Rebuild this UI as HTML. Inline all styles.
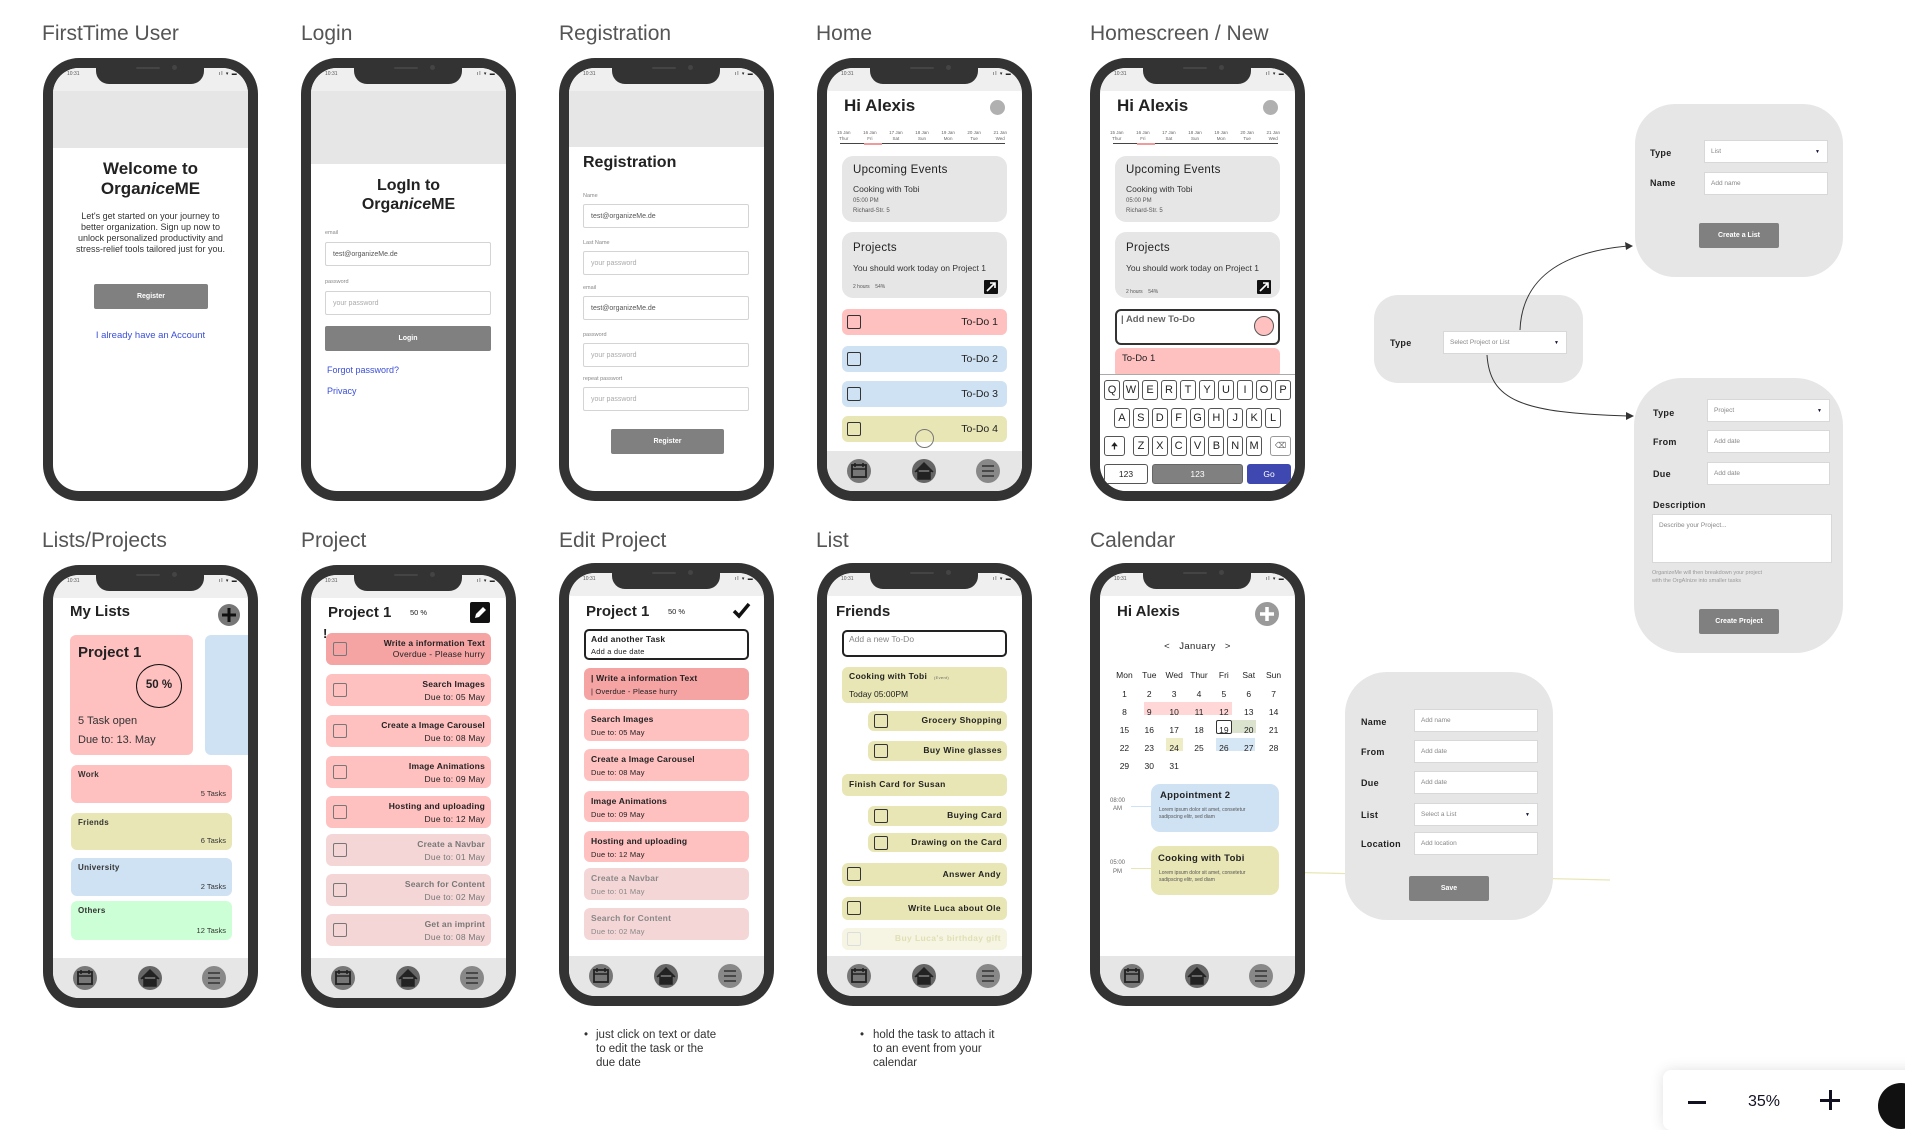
<!DOCTYPE html>
<html><head><meta charset="utf-8"><style>
*{box-sizing:border-box;margin:0;padding:0}
body{width:1905px;height:1105px;background:#fff;position:relative;overflow:hidden;font-family:"Liberation Sans",Arial,sans-serif;color:#222}
.a{position:absolute;white-space:nowrap}
.ttl{position:absolute;font-size:21px;color:#555;line-height:24px}
.ph{position:absolute;width:215px;height:443px;background:#333;border-radius:36px}
.sc{position:absolute;left:10px;top:10px;width:195px;height:423px;background:#fff;border-radius:26px;overflow:hidden}
.c{position:absolute;left:-10px;top:-10px;width:215px;height:443px}
.stb{position:absolute;left:10px;top:10px;width:195px;height:23px;background:#efefef}
.notch{position:absolute;left:53px;top:0;width:108px;height:26px;background:#333;border-radius:0 0 13px 13px}
.notch:before{content:"";position:absolute;left:40px;top:9px;width:24px;height:2px;background:#444;border-radius:1px}
.notch:after{content:"";position:absolute;left:76px;top:7px;width:5px;height:5px;background:#444;border-radius:50%}
.tm{position:absolute;left:24px;top:13px;font-size:5px;color:#555}
.sig{position:absolute;left:176px;top:13px;font-size:5px;color:#222;letter-spacing:1px}
.nv{position:absolute;left:10px;top:393px}
.hdr{position:absolute;left:10px;top:10px;width:195px;background:#e6e6e6}
.inp{position:absolute;left:24px;width:166px;height:24px;border:1px solid #d4d4d4;border-radius:2px;background:#fff;font-size:7px;color:#aaa;padding:8px 0 0 7px}
.lbl{position:absolute;left:24px;font-size:5.5px;color:#888}
.btn{position:absolute;background:#808080;color:#fff;font-size:7px;font-weight:bold;text-align:center;border-radius:2px}
.bg{position:absolute;left:25px;width:165px;background:#e6e6e6;border-radius:11px}
.row{position:absolute;left:25px;width:165px;border-radius:6px}
.cb{position:absolute;width:14px;height:14px;border:1.5px solid #333;border-radius:2px}
.pk{background:#ffc0c0}.bl{background:#cfe2f3}.yl{background:#e8e6b5}.dp{background:#f5a3a3}.lp{background:#f5d6d6}.gr{background:#ccffd5}
.kb{position:absolute;height:20px;border:1.2px solid #555;border-radius:3px;background:#fff;font-size:11px;text-align:center;line-height:18px;color:#222}
.pn{position:absolute;background:#e6e6e6}
.fl{position:absolute;font-size:9px;font-weight:bold;color:#222;letter-spacing:.3px}
.fi{position:absolute;background:#fff;border:1px solid #d8d8d8;font-size:6.5px;color:#888;padding:7px 0 0 6px;height:23px}
.dd:after{content:"▼";position:absolute;right:7px;top:8px;font-size:5px;color:#113}
.note{position:absolute;font-size:11.5px;color:#333;line-height:14px}
.cal span{display:inline-block;width:24.86px;text-align:center}
</style></head><body>

<!-- Titles -->
<div class="ttl" style="left:42px;top:22px">FirstTime User</div>
<div class="ttl" style="left:301px;top:22px">Login</div>
<div class="ttl" style="left:559px;top:22px">Registration</div>
<div class="ttl" style="left:816px;top:22px">Home</div>
<div class="ttl" style="left:1090px;top:22px">Homescreen / New</div>
<div class="ttl" style="left:42px;top:529px">Lists/Projects</div>
<div class="ttl" style="left:301px;top:529px">Project</div>
<div class="ttl" style="left:559px;top:529px">Edit Project</div>
<div class="ttl" style="left:816px;top:529px">List</div>
<div class="ttl" style="left:1090px;top:529px">Calendar</div>

<!-- FirstTime -->
<div class="ph" style="left:43px;top:58px"><div class="sc"><div class="c">
<div class="hdr" style="height:80px"></div><div class="stb"></div>
<div class="a" style="left:0;width:215px;text-align:center;top:101px;font-size:17px;font-weight:bold;line-height:20px">Welcome to<br>Orga<i>nice</i>ME</div>
<div class="a" style="left:30px;width:155px;text-align:center;top:153px;font-size:9px;line-height:11px;white-space:normal;color:#333">Let's get started on your journey to better organization. Sign up now to unlock personalized productivity and stress-relief tools tailored just for you.</div>
<div class="btn" style="left:51px;top:226px;width:114px;height:25px;line-height:25px">Register</div>
<div class="a" style="left:0;width:215px;text-align:center;top:272px;font-size:9.5px;color:#3b4fd8">I already have an Account</div>
</div></div><div class="notch"></div><div class="tm">10:31</div><div class="sig">ıl ▾ ▬</div></div>

<!-- Login -->
<div class="ph" style="left:301px;top:58px"><div class="sc"><div class="c">
<div class="hdr" style="height:96px"></div><div class="stb"></div>
<div class="a" style="left:0;width:215px;text-align:center;top:118px;font-size:16px;font-weight:bold;line-height:19px">LogIn to<br>Orga<i>nice</i>ME</div>
<div class="lbl" style="top:172px">email</div>
<div class="inp" style="top:184px;color:#555">test@organizeMe.de</div>
<div class="lbl" style="top:221px">password</div>
<div class="inp" style="top:233px">your password</div>
<div class="btn" style="left:24px;top:268px;width:166px;height:25px;line-height:25px">Login</div>
<div class="a" style="left:26px;top:307px;font-size:9px;color:#3b4fd8">Forgot password?</div>
<div class="a" style="left:26px;top:328px;font-size:9px;color:#3b4fd8">Privacy</div>
</div></div><div class="notch"></div><div class="tm">10:31</div><div class="sig">ıl ▾ ▬</div></div>

<!-- Registration -->
<div class="ph" style="left:559px;top:58px"><div class="sc"><div class="c">
<div class="hdr" style="height:79px"></div><div class="stb"></div>
<div class="a" style="left:24px;top:96px;font-size:16px;font-weight:bold">Registration</div>
<div class="lbl" style="top:135px">Name</div><div class="inp" style="top:146px;color:#555">test@organizeMe.de</div>
<div class="lbl" style="top:182px">Last Name</div><div class="inp" style="top:193px">your password</div>
<div class="lbl" style="top:227px">email</div><div class="inp" style="top:238px;color:#555">test@organizeMe.de</div>
<div class="lbl" style="top:274px">password</div><div class="inp" style="top:285px">your password</div>
<div class="lbl" style="top:318px">repeat passwort</div><div class="inp" style="top:329px">your password</div>
<div class="btn" style="left:52px;top:371px;width:113px;height:25px;line-height:25px">Register</div>
</div></div><div class="notch"></div><div class="tm">10:31</div><div class="sig">ıl ▾ ▬</div></div>

<!-- Home -->
<div class="ph" style="left:817px;top:58px"><div class="sc"><div class="c">
<div class="stb"></div>
<div class="a" style="left:27px;top:38px;font-size:17px;font-weight:bold">Hi Alexis</div>
<div class="a" style="left:173px;top:42px;width:15px;height:15px;border-radius:50%;background:#b0b0b0"></div>
<div class="a" style="left:20px;top:72px;width:170px;font-size:4.5px;color:#666;line-height:6px;display:flex;justify-content:space-between;text-align:center"><span>15 Jan<br>Thur</span><span>16 Jan<br>Fri</span><span>17 Jan<br>Sat</span><span>18 Jan<br>Sun</span><span>19 Jan<br>Mon</span><span>20 Jan<br>Tue</span><span>21 Jan<br>Wed</span></div>
<div class="a" style="left:23px;top:85px;width:165px;height:1px;background:#444"></div>
<div class="a" style="left:47px;top:85px;width:18px;height:1.5px;background:#f19a9a"></div>
<div class="bg" style="top:98px;height:66px"></div>
<div class="a" style="left:36px;top:106px;font-size:11.5px;color:#222;letter-spacing:.3px">Upcoming Events</div>
<div class="a" style="left:36px;top:126px;font-size:8.5px;color:#333">Cooking with Tobi</div>
<div class="a" style="left:36px;top:140px;font-size:6px;color:#555">05:00 PM</div>
<div class="a" style="left:36px;top:150px;font-size:6px;color:#555">Richard-Str. 5</div>
<div class="bg" style="top:174px;height:66px"></div>
<div class="a" style="left:36px;top:184px;font-size:11.5px;letter-spacing:.3px">Projects</div>
<div class="a" style="left:36px;top:205px;font-size:8.5px;color:#333">You should work today on Project 1</div>
<div class="a" style="left:36px;top:226px;font-size:5px;color:#555">2 hours &nbsp;&nbsp; 54%</div>
<svg class="a" style="left:167px;top:222px" width="14" height="14"><rect width="14" height="14" rx="1" fill="#111"/><path d="M3 11 L11 3 M6 3 H11 V8" stroke="#fff" stroke-width="1.6" fill="none"/></svg>
<div class="row pk" style="top:251px;height:26px"><div class="cb" style="left:5px;top:6px"></div><div class="a" style="right:9px;top:7px;font-size:10.5px">To-Do 1</div></div>
<div class="row bl" style="top:288px;height:26px"><div class="cb" style="left:5px;top:6px"></div><div class="a" style="right:9px;top:7px;font-size:10.5px">To-Do 2</div></div>
<div class="row bl" style="top:323px;height:26px"><div class="cb" style="left:5px;top:6px"></div><div class="a" style="right:9px;top:7px;font-size:10.5px">To-Do 3</div></div>
<div class="row yl" style="top:358px;height:26px"><div class="cb" style="left:5px;top:6px"></div><div class="a" style="right:9px;top:7px;font-size:10.5px">To-Do 4</div></div>
<div class="a" style="left:98px;top:371px;width:19px;height:19px;border-radius:50%;border:1px solid #777"></div>
<div class="a" style="left:10px;top:393px;width:195px;height:40px;background:#e6e6e6"></div>
<svg class="nv" width="195" height="40"><circle cx="32" cy="20" r="12" fill="#777"/><rect x="25" y="14" width="14" height="12" fill="none" stroke="#222" stroke-width="1.8"/><path d="M25 18H39M28 12V16M36 12V16" stroke="#222" stroke-width="1.6"/><circle cx="97" cy="20" r="12" fill="#666"/><path d="M88 21 L97 12 L106 21 M91 19 V28 H103 V19" fill="#222" stroke="#222" stroke-width="1.5"/><circle cx="161" cy="20" r="12" fill="#888"/><path d="M155 15H167M155 20H167M155 25H167" stroke="#333" stroke-width="1.5"/></svg>
</div></div><div class="notch"></div><div class="tm">10:31</div><div class="sig">ıl ▾ ▬</div></div>

<!-- Homescreen / New -->
<div class="ph" style="left:1090px;top:58px"><div class="sc"><div class="c">
<div class="stb"></div>
<div class="a" style="left:27px;top:38px;font-size:17px;font-weight:bold">Hi Alexis</div>
<div class="a" style="left:173px;top:42px;width:15px;height:15px;border-radius:50%;background:#b0b0b0"></div>
<div class="a" style="left:20px;top:72px;width:170px;font-size:4.5px;color:#666;line-height:6px;display:flex;justify-content:space-between;text-align:center"><span>15 Jan<br>Thur</span><span>16 Jan<br>Fri</span><span>17 Jan<br>Sat</span><span>18 Jan<br>Sun</span><span>19 Jan<br>Mon</span><span>20 Jan<br>Tue</span><span>21 Jan<br>Wed</span></div>
<div class="a" style="left:23px;top:85px;width:165px;height:1px;background:#444"></div>
<div class="a" style="left:47px;top:85px;width:18px;height:1.5px;background:#f19a9a"></div>
<div class="bg" style="top:98px;height:66px"></div>
<div class="a" style="left:36px;top:106px;font-size:11.5px;letter-spacing:.3px">Upcoming Events</div>
<div class="a" style="left:36px;top:126px;font-size:8.5px;color:#333">Cooking with Tobi</div>
<div class="a" style="left:36px;top:140px;font-size:6px;color:#555">05:00 PM</div>
<div class="a" style="left:36px;top:150px;font-size:6px;color:#555">Richard-Str. 5</div>
<div class="bg" style="top:174px;height:66px"></div>
<div class="a" style="left:36px;top:184px;font-size:11.5px;letter-spacing:.3px">Projects</div>
<div class="a" style="left:36px;top:205px;font-size:8.5px;color:#333">You should work today on Project 1</div>
<div class="a" style="left:36px;top:231px;font-size:5px;color:#555">2 hours &nbsp;&nbsp; 54%</div>
<svg class="a" style="left:167px;top:222px" width="14" height="14"><rect width="14" height="14" rx="1" fill="#111"/><path d="M3 11 L11 3 M6 3 H11 V8" stroke="#fff" stroke-width="1.6" fill="none"/></svg>
<div class="row pk" style="top:290px;height:30px"><div class="a" style="left:7px;top:5px;font-size:9.5px">To-Do 1</div></div>
<div class="a" style="left:25px;top:251px;width:165px;height:36px;border:2px solid #333;border-radius:6px;background:#fff"></div>
<div class="a" style="left:31px;top:256px;font-size:9.5px;color:#666;font-weight:bold">| Add new To-Do</div>
<div class="a" style="left:164px;top:258px;width:20px;height:20px;border-radius:50%;background:#ffc0c0;border:1px solid #555"></div>
<div class="a" style="left:10px;top:316px;width:195px;height:117px;background:#fff;border-top:1px solid #aaa"></div>
<div class="a" style="left:14px;top:322px;width:187px;display:flex;gap:3px">
<div class="kb" style="position:relative;flex:1">Q</div><div class="kb" style="position:relative;flex:1">W</div><div class="kb" style="position:relative;flex:1">E</div><div class="kb" style="position:relative;flex:1">R</div><div class="kb" style="position:relative;flex:1">T</div><div class="kb" style="position:relative;flex:1">Y</div><div class="kb" style="position:relative;flex:1">U</div><div class="kb" style="position:relative;flex:1">I</div><div class="kb" style="position:relative;flex:1">O</div><div class="kb" style="position:relative;flex:1">P</div></div>
<div class="a" style="left:24px;top:350px;width:167px;display:flex;gap:3px">
<div class="kb" style="position:relative;flex:1">A</div><div class="kb" style="position:relative;flex:1">S</div><div class="kb" style="position:relative;flex:1">D</div><div class="kb" style="position:relative;flex:1">F</div><div class="kb" style="position:relative;flex:1">G</div><div class="kb" style="position:relative;flex:1">H</div><div class="kb" style="position:relative;flex:1">J</div><div class="kb" style="position:relative;flex:1">K</div><div class="kb" style="position:relative;flex:1">L</div></div>
<div class="kb" style="left:14px;top:378px;width:21px;font-size:9px">🠉</div>
<div class="a" style="left:43px;top:378px;width:129px;display:flex;gap:3px">
<div class="kb" style="position:relative;flex:1">Z</div><div class="kb" style="position:relative;flex:1">X</div><div class="kb" style="position:relative;flex:1">C</div><div class="kb" style="position:relative;flex:1">V</div><div class="kb" style="position:relative;flex:1">B</div><div class="kb" style="position:relative;flex:1">N</div><div class="kb" style="position:relative;flex:1">M</div></div>
<div class="kb" style="left:180px;top:378px;width:21px;font-size:8px;color:#666;border-color:#999">⌫</div>
<div class="kb" style="left:14px;top:406px;width:44px;font-size:8.5px">123</div>
<div class="kb" style="left:62px;top:406px;width:91px;font-size:8.5px;background:#808080;color:#fff;border-color:#666">123</div>
<div class="kb" style="left:157px;top:406px;width:44px;font-size:8.5px;background:#3f48b0;color:#fff;border-color:#3f48b0">Go</div>
</div></div><div class="notch"></div><div class="tm">10:31</div><div class="sig">ıl ▾ ▬</div></div>

<!-- Lists/Projects -->
<div class="ph" style="left:43px;top:565px"><div class="sc"><div class="c">
<div class="stb"></div>
<div class="a" style="left:27px;top:38px;font-size:15px;font-weight:bold">My Lists</div>
<svg class="a" style="left:174px;top:38px" width="24" height="24"><circle cx="12" cy="12" r="11" fill="#777"/><path d="M12 5V19M5 12H19" stroke="#111" stroke-width="3"/></svg>
<div class="a pk" style="left:27px;top:70px;width:123px;height:120px;border-radius:6px"></div>
<div class="a" style="left:35px;top:79px;font-size:15px;font-weight:bold">Project 1</div>
<div class="a" style="left:93px;top:99px;width:46px;height:44px;border:1.5px solid #111;border-radius:50%;font-size:11.5px;font-weight:bold;text-align:center;line-height:41px">50 %</div>
<div class="a" style="left:35px;top:150px;font-size:11px;color:#333">5 Task open</div>
<div class="a" style="left:35px;top:169px;font-size:11px;color:#333">Due to: 13. May</div>
<div class="a bl" style="left:162px;top:70px;width:50px;height:120px;border-radius:6px"></div>
<div class="row pk" style="left:28px;width:161px;top:200px;height:38px"><div class="a" style="left:7px;top:5px;font-size:8px;font-weight:bold;letter-spacing:.3px;color:#333">Work</div><div class="a" style="right:6px;top:24px;font-size:7.5px;color:#333">5 Tasks</div></div>
<div class="row yl" style="left:28px;width:161px;top:248px;height:37px"><div class="a" style="left:7px;top:5px;font-size:8px;font-weight:bold;letter-spacing:.3px;color:#333">Friends</div><div class="a" style="right:6px;top:23px;font-size:7.5px;color:#333">6 Tasks</div></div>
<div class="row bl" style="left:28px;width:161px;top:293px;height:38px"><div class="a" style="left:7px;top:5px;font-size:8px;font-weight:bold;letter-spacing:.3px;color:#333">University</div><div class="a" style="right:6px;top:24px;font-size:7.5px;color:#333">2 Tasks</div></div>
<div class="row gr" style="left:28px;width:161px;top:336px;height:39px"><div class="a" style="left:7px;top:5px;font-size:8px;font-weight:bold;letter-spacing:.3px;color:#333">Others</div><div class="a" style="right:6px;top:25px;font-size:7.5px;color:#333">12 Tasks</div></div>
<div class="a" style="left:10px;top:393px;width:195px;height:40px;background:#e6e6e6"></div>
<svg class="nv" width="195" height="40"><circle cx="32" cy="20" r="12" fill="#777"/><rect x="25" y="14" width="14" height="12" fill="none" stroke="#222" stroke-width="1.8"/><path d="M25 18H39M28 12V16M36 12V16" stroke="#222" stroke-width="1.6"/><circle cx="97" cy="20" r="12" fill="#666"/><path d="M88 21 L97 12 L106 21 M91 19 V28 H103 V19" fill="#222" stroke="#222" stroke-width="1.5"/><circle cx="161" cy="20" r="12" fill="#888"/><path d="M155 15H167M155 20H167M155 25H167" stroke="#333" stroke-width="1.5"/></svg>
</div></div><div class="notch"></div><div class="tm">10:31</div><div class="sig">ıl ▾ ▬</div></div>

<!-- Project -->
<div class="ph" style="left:301px;top:565px"><div class="sc"><div class="c">
<div class="stb"></div>
<div class="a" style="left:27px;top:39px;font-size:15px;font-weight:bold">Project 1</div>
<div class="a" style="left:109px;top:43px;font-size:7.5px">50 %</div>
<svg class="a" style="left:169px;top:37px" width="20" height="21"><rect width="20" height="21" rx="2" fill="#111"/><path d="M5 16 L6 12 L13 5 L16 8 L9 15 Z" fill="#fff"/></svg>
<div class="row dp" style="top:68px;height:32px"><div class="cb" style="left:7px;top:9px;border-color:#777"></div><div class="a" style="right:6px;top:5px;text-align:right;font-size:8.5px;line-height:11px;color:#222;letter-spacing:.2px"><b style="font-weight:600">Write a information Text</b><br>Overdue - Please hurry</div></div>
<div class="a" style="left:22px;top:62px;font-size:13px;font-weight:bold;line-height:13px">!</div>
<div class="row pk" style="top:109px;height:32px"><div class="cb" style="left:7px;top:9px;border-color:#777"></div><div class="a" style="right:6px;top:4px;text-align:right;font-size:8.5px;line-height:13px;color:#222;letter-spacing:.2px"><b style="font-weight:600">Search Images</b><br>Due to: 05 May</div></div>
<div class="row pk" style="top:150px;height:32px"><div class="cb" style="left:7px;top:9px;border-color:#777"></div><div class="a" style="right:6px;top:4px;text-align:right;font-size:8.5px;line-height:13px;color:#222;letter-spacing:.2px"><b style="font-weight:600">Create a Image Carousel</b><br>Due to: 08 May</div></div>
<div class="row pk" style="top:191px;height:32px"><div class="cb" style="left:7px;top:9px;border-color:#777"></div><div class="a" style="right:6px;top:4px;text-align:right;font-size:8.5px;line-height:13px;color:#222;letter-spacing:.2px"><b style="font-weight:600">Image Animations</b><br>Due to: 09 May</div></div>
<div class="row pk" style="top:231px;height:32px"><div class="cb" style="left:7px;top:9px;border-color:#777"></div><div class="a" style="right:6px;top:4px;text-align:right;font-size:8.5px;line-height:13px;color:#222;letter-spacing:.2px"><b style="font-weight:600">Hosting and uploading</b><br>Due to: 12 May</div></div>
<div class="row lp" style="top:269px;height:32px"><div class="cb" style="left:7px;top:9px;border-color:#777"></div><div class="a" style="right:6px;top:4px;text-align:right;font-size:8.5px;line-height:13px;color:#777;letter-spacing:.2px"><b style="font-weight:600">Create a Navbar</b><br>Due to: 01 May</div></div>
<div class="row lp" style="top:309px;height:32px"><div class="cb" style="left:7px;top:9px;border-color:#777"></div><div class="a" style="right:6px;top:4px;text-align:right;font-size:8.5px;line-height:13px;color:#777;letter-spacing:.2px"><b style="font-weight:600">Search for Content</b><br>Due to: 02 May</div></div>
<div class="row lp" style="top:349px;height:32px"><div class="cb" style="left:7px;top:9px;border-color:#777"></div><div class="a" style="right:6px;top:4px;text-align:right;font-size:8.5px;line-height:13px;color:#777;letter-spacing:.2px"><b style="font-weight:600">Get an imprint</b><br>Due to: 08 May</div></div>
<div class="a" style="left:10px;top:393px;width:195px;height:40px;background:#e6e6e6"></div>
<svg class="nv" width="195" height="40"><circle cx="32" cy="20" r="12" fill="#777"/><rect x="25" y="14" width="14" height="12" fill="none" stroke="#222" stroke-width="1.8"/><path d="M25 18H39M28 12V16M36 12V16" stroke="#222" stroke-width="1.6"/><circle cx="97" cy="20" r="12" fill="#666"/><path d="M88 21 L97 12 L106 21 M91 19 V28 H103 V19" fill="#222" stroke="#222" stroke-width="1.5"/><circle cx="161" cy="20" r="12" fill="#888"/><path d="M155 15H167M155 20H167M155 25H167" stroke="#333" stroke-width="1.5"/></svg>
</div></div><div class="notch"></div><div class="tm">10:31</div><div class="sig">ıl ▾ ▬</div></div>

<!-- Edit Project -->
<div class="ph" style="left:559px;top:563px"><div class="sc"><div class="c">
<div class="stb"></div>
<div class="a" style="left:27px;top:40px;font-size:15px;font-weight:bold">Project 1</div>
<div class="a" style="left:109px;top:44px;font-size:7.5px">50 %</div>
<svg class="a" style="left:173px;top:39px" width="19" height="17"><path d="M2 9 L7 14 L17 2" stroke="#111" stroke-width="3.5" fill="none"/></svg>
<div class="a" style="left:25px;top:66px;width:165px;height:31px;border:2px solid #222;border-radius:5px"></div>
<div class="a" style="left:32px;top:70px;font-size:8.5px;line-height:12px;letter-spacing:.2px"><b style="font-weight:600">Add another Task</b><br><span style="font-size:7.5px">Add a due date</span></div>
<div class="row dp" style="top:105px;height:32px"><div class="a" style="left:7px;top:4px;font-size:8.5px;line-height:13px;letter-spacing:.2px"><b style="font-weight:600">| Write a information Text</b><br><span style="font-size:7.5px">| Overdue - Please hurry</span></div></div>
<div class="row pk" style="top:146px;height:32px"><div class="a" style="left:7px;top:4px;font-size:8.5px;line-height:13px;letter-spacing:.2px"><b style="font-weight:600">Search Images</b><br><span style="font-size:7.5px">Due to: 05 May</span></div></div>
<div class="row pk" style="top:186px;height:32px"><div class="a" style="left:7px;top:4px;font-size:8.5px;line-height:13px;letter-spacing:.2px"><b style="font-weight:600">Create a Image Carousel</b><br><span style="font-size:7.5px">Due to: 08 May</span></div></div>
<div class="row pk" style="top:228px;height:31px"><div class="a" style="left:7px;top:4px;font-size:8.5px;line-height:13px;letter-spacing:.2px"><b style="font-weight:600">Image Animations</b><br><span style="font-size:7.5px">Due to: 09 May</span></div></div>
<div class="row pk" style="top:268px;height:31px"><div class="a" style="left:7px;top:4px;font-size:8.5px;line-height:13px;letter-spacing:.2px"><b style="font-weight:600">Hosting and uploading</b><br><span style="font-size:7.5px">Due to: 12 May</span></div></div>
<div class="row lp" style="top:305px;height:32px"><div class="a" style="left:7px;top:4px;font-size:8.5px;line-height:13px;letter-spacing:.2px;color:#888"><b style="font-weight:600">Create a Navbar</b><br><span style="font-size:7.5px">Due to: 01 May</span></div></div>
<div class="row lp" style="top:345px;height:32px"><div class="a" style="left:7px;top:4px;font-size:8.5px;line-height:13px;letter-spacing:.2px;color:#888"><b style="font-weight:600">Search for Content</b><br><span style="font-size:7.5px">Due to: 02 May</span></div></div>
<div class="a" style="left:10px;top:393px;width:195px;height:40px;background:#e6e6e6"></div>
<svg class="nv" width="195" height="40"><circle cx="32" cy="20" r="12" fill="#777"/><rect x="25" y="14" width="14" height="12" fill="none" stroke="#222" stroke-width="1.8"/><path d="M25 18H39M28 12V16M36 12V16" stroke="#222" stroke-width="1.6"/><circle cx="97" cy="20" r="12" fill="#666"/><path d="M88 21 L97 12 L106 21 M91 19 V28 H103 V19" fill="#222" stroke="#222" stroke-width="1.5"/><circle cx="161" cy="20" r="12" fill="#888"/><path d="M155 15H167M155 20H167M155 25H167" stroke="#333" stroke-width="1.5"/></svg>
</div></div><div class="notch"></div><div class="tm">10:31</div><div class="sig">ıl ▾ ▬</div></div>

<!-- List -->
<div class="ph" style="left:817px;top:563px"><div class="sc"><div class="c">
<div class="stb"></div>
<div class="a" style="left:19px;top:40px;font-size:15px;font-weight:bold">Friends</div>
<div class="a" style="left:25px;top:67px;width:165px;height:27px;border:2px solid #222;border-radius:5px"></div>
<div class="a" style="left:32px;top:71px;font-size:8.5px;color:#888">Add a new To-Do</div>
<div class="row yl" style="top:104px;height:36px"><div class="a" style="left:7px;top:4px;font-size:8.5px;font-weight:600;letter-spacing:.3px">Cooking with Tobi <span style="font-size:4px;font-weight:normal;color:#666">&nbsp;&nbsp;&nbsp;(Event)</span></div><div class="a" style="left:7px;top:22px;font-size:8.5px">Today 05:00PM</div></div>
<div class="row yl" style="left:51px;width:139px;top:148px;height:20px"><div class="cb" style="left:6px;top:3px"></div><div class="a" style="right:5px;top:4px;font-size:8.5px;font-weight:600;letter-spacing:.4px">Grocery Shopping</div></div>
<div class="row yl" style="left:51px;width:139px;top:178px;height:20px"><div class="cb" style="left:6px;top:3px"></div><div class="a" style="right:5px;top:4px;font-size:8.5px;font-weight:600;letter-spacing:.4px">Buy Wine glasses</div></div>
<div class="row yl" style="top:211px;height:22px"><div class="a" style="left:7px;top:5px;font-size:8.5px;font-weight:600;letter-spacing:.4px">Finish Card for Susan</div></div>
<div class="row yl" style="left:51px;width:139px;top:243px;height:20px"><div class="cb" style="left:6px;top:3px"></div><div class="a" style="right:5px;top:4px;font-size:8.5px;font-weight:600;letter-spacing:.4px">Buying Card</div></div>
<div class="row yl" style="left:51px;width:139px;top:270px;height:19px"><div class="cb" style="left:6px;top:3px"></div><div class="a" style="right:5px;top:4px;font-size:8.5px;font-weight:600;letter-spacing:.4px">Drawing on the Card</div></div>
<div class="row yl" style="top:300px;height:23px"><div class="cb" style="left:5px;top:4px"></div><div class="a" style="right:6px;top:6px;font-size:8.5px;font-weight:600;letter-spacing:.4px">Answer Andy</div></div>
<div class="row yl" style="top:334px;height:23px"><div class="cb" style="left:5px;top:4px"></div><div class="a" style="right:6px;top:6px;font-size:8.5px;font-weight:600;letter-spacing:.4px">Write Luca about Ole</div></div>
<div class="row" style="top:365px;height:22px;background:#f6f5e3"><div class="cb" style="left:5px;top:4px;border-color:#ddd"></div><div class="a" style="right:6px;top:5px;font-size:8.5px;font-weight:600;letter-spacing:.4px;color:#e0dfb3">Buy Luca's birthday gift</div></div>
<div class="a" style="left:10px;top:393px;width:195px;height:40px;background:#e6e6e6"></div>
<svg class="nv" width="195" height="40"><circle cx="32" cy="20" r="12" fill="#777"/><rect x="25" y="14" width="14" height="12" fill="none" stroke="#222" stroke-width="1.8"/><path d="M25 18H39M28 12V16M36 12V16" stroke="#222" stroke-width="1.6"/><circle cx="97" cy="20" r="12" fill="#666"/><path d="M88 21 L97 12 L106 21 M91 19 V28 H103 V19" fill="#222" stroke="#222" stroke-width="1.5"/><circle cx="161" cy="20" r="12" fill="#888"/><path d="M155 15H167M155 20H167M155 25H167" stroke="#333" stroke-width="1.5"/></svg>
</div></div><div class="notch"></div><div class="tm">10:31</div><div class="sig">ıl ▾ ▬</div></div>

<!-- yellow connector line -->
<svg class="a" style="left:1280px;top:860px" width="350" height="30"><path d="M0 12 L330 20" stroke="#e8e6b5" stroke-width="1.2"/></svg>

<!-- Calendar -->
<div class="ph" style="left:1090px;top:563px"><div class="sc"><div class="c">
<div class="stb"></div>
<div class="a" style="left:27px;top:40px;font-size:15px;font-weight:bold">Hi Alexis</div>
<svg class="a" style="left:165px;top:39px" width="24" height="24"><circle cx="12" cy="12" r="12" fill="#9a9a9a"/><path d="M12 5V19M5 12H19" stroke="#fff" stroke-width="3.5"/></svg>
<div class="a" style="left:0;width:215px;text-align:center;top:78px;font-size:9.5px;letter-spacing:.4px">&lt;&nbsp;&nbsp; January &nbsp;&nbsp;&gt;</div>
<div class="a" style="left:54px;top:139px;width:88px;height:13px;background:#ffd7d7"></div>
<div class="a" style="left:142px;top:157px;width:24px;height:13px;background:#dbe3cf"></div>
<div class="a" style="left:76px;top:175px;width:17px;height:13px;background:#eeecc4"></div>
<div class="a" style="left:126px;top:175px;width:39px;height:13px;background:#d5e6f5"></div>
<div class="a" style="left:126px;top:157px;width:16px;height:14px;border:1.5px solid #333;border-radius:2px"></div>
<div class="a cal" style="left:22px;top:103px;font-size:8.5px;line-height:18px;color:#222">
<div><span>Mon</span><span>Tue</span><span>Wed</span><span>Thur</span><span>Fri</span><span>Sat</span><span>Sun</span></div>
<div style="margin-top:1px"><span>1</span><span>2</span><span>3</span><span>4</span><span>5</span><span>6</span><span>7</span></div>
<div><span>8</span><span>9</span><span>10</span><span>11</span><span>12</span><span>13</span><span>14</span></div>
<div><span>15</span><span>16</span><span>17</span><span>18</span><span>19</span><span>20</span><span>21</span></div>
<div><span>22</span><span>23</span><span>24</span><span>25</span><span>26</span><span>27</span><span>28</span></div>
<div><span>29</span><span>30</span><span>31</span></div></div>
<div class="a" style="left:41px;top:243px;width:20px;height:1px;background:#cfe2f3"></div>
<div class="a" style="left:20px;top:234px;font-size:6px;color:#666;text-align:center;line-height:8px">08:00<br>AM</div>
<div class="a bl" style="left:61px;top:221px;width:128px;height:48px;border-radius:9px"></div>
<div class="a" style="left:70px;top:227px;font-size:9.5px;font-weight:600;letter-spacing:.3px">Appointment 2</div>
<div class="a" style="left:69px;top:244px;font-size:5px;color:#555;line-height:7px">Lorem ipsum dolor sit amet, consetetur<br>sadipscing elitr, sed diam</div>
<div class="a" style="left:41px;top:305px;width:20px;height:1px;background:#e8e6b5"></div>
<div class="a" style="left:20px;top:296px;font-size:6px;color:#666;text-align:center;line-height:9px">05:00<br>PM</div>
<div class="a yl" style="left:61px;top:283px;width:128px;height:49px;border-radius:9px"></div>
<div class="a" style="left:68px;top:290px;font-size:9.5px;font-weight:600;letter-spacing:.3px">Cooking with Tobi</div>
<div class="a" style="left:69px;top:307px;font-size:5px;color:#555;line-height:7px">Lorem ipsum dolor sit amet, consetetur<br>sadipscing elitr, sed diam</div>
<div class="a" style="left:10px;top:393px;width:195px;height:40px;background:#e6e6e6"></div>
<svg class="nv" width="195" height="40"><circle cx="32" cy="20" r="12" fill="#777"/><rect x="25" y="14" width="14" height="12" fill="none" stroke="#222" stroke-width="1.8"/><path d="M25 18H39M28 12V16M36 12V16" stroke="#222" stroke-width="1.6"/><circle cx="97" cy="20" r="12" fill="#666"/><path d="M88 21 L97 12 L106 21 M91 19 V28 H103 V19" fill="#222" stroke="#222" stroke-width="1.5"/><circle cx="161" cy="20" r="12" fill="#888"/><path d="M155 15H167M155 20H167M155 25H167" stroke="#333" stroke-width="1.5"/></svg>
</div></div><div class="notch"></div><div class="tm">10:31</div><div class="sig">ıl ▾ ▬</div></div>

<!-- Right side panels -->
<div class="pn" style="left:1374px;top:295px;width:209px;height:88px;border-radius:24px"></div>
<div class="fl" style="left:1390px;top:338px">Type</div>
<div class="fi dd" style="left:1443px;top:331px;width:124px">Select Project or List</div>

<div class="pn" style="left:1635px;top:104px;width:208px;height:173px;border-radius:40px"></div>
<div class="fl" style="left:1650px;top:148px">Type</div>
<div class="fi dd" style="left:1704px;top:140px;width:124px">List</div>
<div class="fl" style="left:1650px;top:178px">Name</div>
<div class="fi" style="left:1704px;top:172px;width:124px">Add name</div>
<div class="btn" style="left:1699px;top:223px;width:80px;height:25px;line-height:25px">Create a List</div>

<div class="pn" style="left:1634px;top:378px;width:209px;height:275px;border-radius:48px"></div>
<div class="fl" style="left:1653px;top:408px">Type</div>
<div class="fi dd" style="left:1707px;top:399px;width:123px">Project</div>
<div class="fl" style="left:1653px;top:437px">From</div>
<div class="fi" style="left:1707px;top:430px;width:123px">Add date</div>
<div class="fl" style="left:1653px;top:469px">Due</div>
<div class="fi" style="left:1707px;top:462px;width:123px">Add date</div>
<div class="fl" style="left:1653px;top:500px">Description</div>
<div class="fi" style="left:1652px;top:514px;width:180px;height:49px">Describe your Project...</div>
<div class="a" style="left:1652px;top:569px;font-size:5.5px;color:#999;line-height:8px">OrganizeMe will then breakdown your project<br>with the OrgAInize into smaller tasks</div>
<div class="btn" style="left:1699px;top:609px;width:80px;height:25px;line-height:25px">Create Project</div>

<div class="pn" style="left:1345px;top:672px;width:208px;height:248px;border-radius:42px"></div>
<div class="fl" style="left:1361px;top:717px">Name</div>
<div class="fi" style="left:1414px;top:709px;width:124px">Add name</div>
<div class="fl" style="left:1361px;top:747px">From</div>
<div class="fi" style="left:1414px;top:740px;width:124px">Add date</div>
<div class="fl" style="left:1361px;top:778px">Due</div>
<div class="fi" style="left:1414px;top:771px;width:124px">Add date</div>
<div class="fl" style="left:1361px;top:810px">List</div>
<div class="fi dd" style="left:1414px;top:803px;width:124px">Select a List</div>
<div class="fl" style="left:1361px;top:839px">Location</div>
<div class="fi" style="left:1414px;top:832px;width:124px">Add location</div>
<div class="btn" style="left:1409px;top:876px;width:80px;height:25px;line-height:25px">Save</div>

<!-- arrows -->
<svg class="a" style="left:0;top:0" width="1905" height="1105">
<path d="M1520 330 C1522 278 1562 252 1628 246" stroke="#333" stroke-width="1" fill="none"/>
<path d="M1633 246 L1625 242 L1626 250 Z" fill="#333"/>
<path d="M1487 355 C1490 400 1520 413 1628 416" stroke="#333" stroke-width="1" fill="none"/>
<path d="M1634 416 L1626 412 L1626 420 Z" fill="#333"/>
</svg>

<!-- notes -->
<div class="note" style="left:584px;top:1028px">•</div>
<div class="note" style="left:596px;top:1028px">just click on text or date<br>to edit the task or the<br>due date</div>
<div class="note" style="left:860px;top:1028px">•</div>
<div class="note" style="left:873px;top:1028px">hold the task to attach it<br>to an event from your<br>calendar</div>

<!-- zoom control -->
<div class="a" style="left:1663px;top:1070px;width:260px;height:60px;background:#fff;border-radius:8px;box-shadow:0 0 14px rgba(0,0,0,.12)"></div>
<div class="a" style="left:1688px;top:1101px;width:18px;height:3px;background:#112"></div>
<div class="a" style="left:1748px;top:1093px;font-size:16px;color:#112">35%</div>
<div class="a" style="left:1820px;top:1099px;width:20px;height:3px;background:#112"></div>
<div class="a" style="left:1828.5px;top:1090px;width:3px;height:20px;background:#112"></div>
<div class="a" style="left:1878px;top:1083px;width:46px;height:46px;border-radius:50%;background:#111"></div>
</body></html>
